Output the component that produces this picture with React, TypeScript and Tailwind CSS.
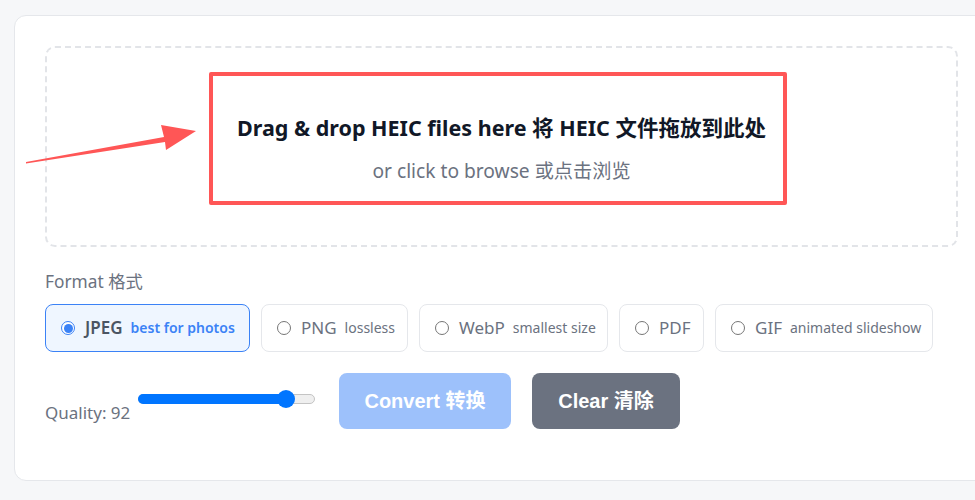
import React from "react";

const sans = '"Noto Sans", "Noto Sans CJK SC", sans-serif';
const btnFont = '"Liberation Sans", "Noto Sans CJK SC", sans-serif';

type Opt = { name: string; desc?: string; checked?: boolean; w: string };

const options: Opt[] = [
  { name: "JPEG", desc: "best for photos", checked: true, w: "w-[205px]" },
  { name: "PNG", desc: "lossless", w: "w-[147px]" },
  { name: "WebP", desc: "smallest size", w: "w-[189px]" },
  { name: "PDF", w: "w-[85px]" },
  { name: "GIF", desc: "animated slideshow", w: "w-[218px]" },
];

function Radio({ checked }: { checked?: boolean }) {
  if (checked) {
    return (
      <span className="flex h-[14px] w-[14px] shrink-0 items-center justify-center rounded-full border-[1.5px] border-[#3b82f6] bg-white">
        <span className="h-[9px] w-[9px] rounded-full bg-[#3b82f6]" />
      </span>
    );
  }
  return <span className="h-[14px] w-[14px] shrink-0 rounded-full border-[1.5px] border-[#767676] bg-white" />;
}

export default function App() {
  return (
    <div className="relative h-[500px] w-[975px] overflow-hidden bg-[#f6f7f9]" style={{ fontFamily: sans }}>
      <div className="ml-[14px] mt-[15px] h-[466px] w-[975px] rounded-[12px] border border-[#e5e7eb] bg-white px-[30px] pt-[30px]">
        {/* Drop zone */}
        <div className="relative flex h-[201px] w-[913px] flex-col items-center justify-center rounded-[10px] border-2 border-dashed border-[#e2e4e8] pt-[3px]">
          <div className="text-[21.5px] font-bold leading-[30px] text-[#111827]">
            Drag &amp; drop HEIC files here 将 HEIC 文件拖放到此处
          </div>
          <div className="mt-[15px] text-[19.2px] leading-[26px] text-[#6b7280]">or click to browse 或点击浏览</div>
        </div>

        {/* Format */}
        <div className="mt-[23px] text-[17.3px] leading-[24px] text-[#6b7280]">Format 格式</div>
        <div className="mt-[10px] flex gap-[11px]">
          {options.map((o) => (
            <div
              key={o.name}
              className={
                "flex h-[48px] items-center rounded-[8px] border pl-[15px] " +
                o.w +
                (o.checked ? " border-[#3b82f6] bg-[#eff6ff]" : " border-[#e5e7eb] bg-white")
              }
            >
              <Radio checked={o.checked} />
              <span
                className={
                  "ml-[10px] text-[17px] leading-[24px] " +
                  (o.checked ? "font-semibold text-[#4b5563]" : "text-[#6b7280]")
                }
              >
                {o.name}
              </span>
              {o.desc && (
                <span
                  className={
                    "ml-[8px] text-[14px] leading-[24px] " +
                    (o.checked ? "font-semibold text-[#3b82f6]" : "text-[#6b7280]")
                  }
                >
                  {o.desc}
                </span>
              )}
            </div>
          ))}
        </div>

        {/* Quality + buttons */}
        <div className="mt-[21px] flex items-start">
          <div className="mt-[28px] w-[84px] whitespace-nowrap text-[17px] leading-[24px] text-[#6b7280]">Quality: 92</div>
          <div className="relative ml-[9px] mt-[17px] h-[18px] w-[177px]">
            <div className="absolute left-0 top-[4px] h-[10px] w-[177px] rounded-full border border-[#c4c4c4] bg-[#efefef]" />
            <div className="absolute left-0 top-[4px] h-[10px] w-[148px] rounded-full bg-[#0075ff]" />
            <div className="absolute left-[139px] top-0 h-[18px] w-[18px] rounded-full bg-[#0075ff]" />
          </div>
          <button
            className="ml-[24px] h-[56px] w-[172px] rounded-[8px] bg-[#9dc1fb] text-[20px] font-bold text-white"
            style={{ fontFamily: btnFont }}
          >
            Convert 转换
          </button>
          <button
            className="ml-[21px] h-[56px] w-[148px] rounded-[8px] bg-[#6b7280] text-[20px] font-bold text-white"
            style={{ fontFamily: btnFont }}
          >
            Clear 清除
          </button>
        </div>
      </div>

      {/* Annotation: red box */}
      <div className="pointer-events-none absolute left-[209px] top-[72px] h-[133px] w-[578px] rounded-[2px] border-[4px] border-[#ff5656]" />
      {/* Annotation: arrow */}
      <svg className="pointer-events-none absolute left-0 top-0" width="975" height="500" viewBox="0 0 975 500">
        <polygon points="26,162 164,137 161,125 196,131 166,150 165,142 26,163.5" fill="#ff5656" />
      </svg>
    </div>
  );
}
